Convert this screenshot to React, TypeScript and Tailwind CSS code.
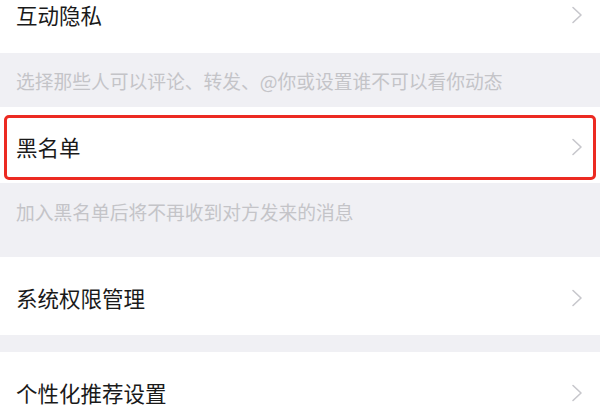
import React from 'react';

const FONT = '"Noto Sans CJK SC", "Noto Sans", sans-serif';

function Chevron() {
    return (
        <svg width="12" height="18" viewBox="0 0 12 18" fill="none" className="shrink-0">
            <polyline points="2,1.5 10,9 2,16.5" stroke="#c7c7cc" strokeWidth="1.6" strokeLinecap="round" strokeLinejoin="round" />
        </svg>
    );
}

// Single settings row
function Row({ label, className }: { label: string; className: string }) {
    return (
        <div className={`bg-white shrink-0 flex justify-between pl-[16px] pr-[17px] ${className}`}>
            <span className="text-[21.5px] leading-[30px] text-[#1a1a1a]">{label}</span>
            <Chevron />
        </div>
    );
}

export default function App() {
    return (
        <div className="w-[600px] h-[420px] overflow-hidden bg-[#f0f0f4] flex flex-col" style={{ fontFamily: FONT }}>
            {/* 互动隐私 (cut at top) */}
            <Row label="互动隐私" className="h-[53px] items-start [&>svg]:mt-[6px]" />

            {/* hint */}
            <div className="h-[54px] shrink-0 pl-[16px] pt-[14px]">
                <p className="text-[18.75px] leading-[28px] text-[#c4c4c8]">
                    选择那些人可以评论、转发、@你或设置谁不可以看你动态
                </p>
            </div>

            {/* 黑名单, highlighted */}
            <div className="relative shrink-0">
                <Row label="黑名单" className="h-[76px] items-center pt-[4px]" />
                <div className="absolute left-[4px] right-[4px] top-[8px] bottom-[3px] border-[3.5px] border-[#ec2a22] rounded-[5px]" />
            </div>

            <div className="h-[74px] shrink-0 pl-[16px] pt-[15px]">
                <p className="text-[18.75px] leading-[28px] text-[#c4c4c8]">加入黑名单后将不再收到对方发来的消息</p>
            </div>

            <Row label="系统权限管理" className="h-[78px] items-center pt-[4px]" />

            <div className="h-[17px] shrink-0" />

            <Row label="个性化推荐设置" className="h-[82px] items-center" />
        </div>
    );
}
